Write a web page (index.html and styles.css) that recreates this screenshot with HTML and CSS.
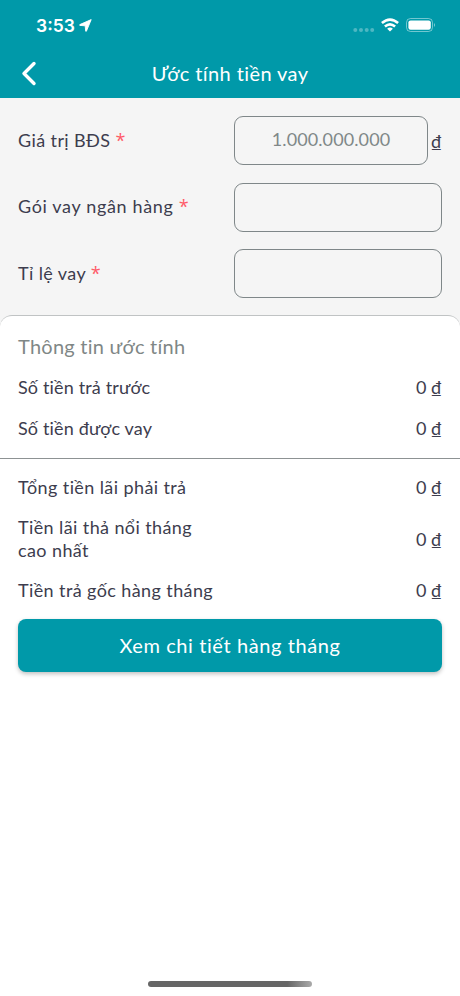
FILE: index.html
```html
<!DOCTYPE html>
<html lang="vi">
<head>
    <meta charset="UTF-8">
    <meta name="viewport" content="width=device-width, initial-scale=1.0">
    <title>Ước tính tiền vay</title>
    <link rel="stylesheet" href="styles.css">
</head>
<body>
    <header class="header">
        <div class="status-bar">
            <span class="time">3:53</span>
            <svg class="location" width="13" height="13" viewBox="0 0 13 13">
                <path d="M12.2 0.6 L0.8 5.6 L0.8 6.4 L6.2 6.8 L6.7 12.2 L7.4 12.2 Z" fill="#fff" stroke="#fff" stroke-width="0.9" stroke-linejoin="round"/>
            </svg>
            <div class="status-icons">
                <svg width="22" height="14" viewBox="0 0 22 14" fill="#fff" fill-opacity="0.3">
                    <circle cx="2.3" cy="12" r="2"/>
                    <circle cx="8" cy="12" r="2"/>
                    <circle cx="13.7" cy="12" r="2"/>
                    <circle cx="19.2" cy="12" r="2"/>
                </svg>
                <svg class="wifi" width="18" height="14" viewBox="0 0 18 14" fill="none" stroke="#fff" stroke-width="2.6">
                    <path d="M0.9 5.1 Q9 -1.9 17.1 5.1"/>
                    <path d="M3.9 8.5 Q9 4.2 14.1 8.5"/>
                    <path d="M9 13.6 L6.1 10.7 Q9 8.5 11.9 10.7 Z" fill="#fff" stroke="none"/>
                </svg>
                <svg class="battery" width="30" height="14" viewBox="0 0 30 14">
                    <rect x="0.5" y="0.5" width="26" height="13" rx="4" fill="none" stroke="#fff" stroke-opacity="0.45"/>
                    <rect x="2.4" y="2.4" width="22.4" height="9.4" rx="2.2" fill="#fff"/>
                    <path d="M28 5 Q30 7 28 9 Z" fill="#fff" fill-opacity="0.5"/>
                </svg>
            </div>
        </div>
        <div class="nav-bar">
            <button type="button" class="back" aria-label="Quay lại">
                <svg width="16" height="26" viewBox="0 0 16 26" fill="none" stroke="#fff" stroke-width="3.4" stroke-linecap="round" stroke-linejoin="round">
                    <path d="M13 2.5 L3 12.5 L13 22.5"/>
                </svg>
            </button>
            <h1>Ước tính tiền vay</h1>
        </div>
    </header>

    <form class="loan-form">
        <div class="form-group">
            <label for="price">Giá trị BĐS <span class="required">*</span></label>
            <div class="field">
                <input type="text" id="price" placeholder="1.000.000.000">
                <span class="unit">₫</span>
            </div>
        </div>
        <div class="form-group">
            <label class="wide" for="bank">Gói vay ngân hàng <span class="required">*</span></label>
            <div class="field"><input type="text" id="bank"></div>
        </div>
        <div class="form-group">
            <label for="rate">Tỉ lệ vay <span class="required">*</span></label>
            <div class="field"><input type="text" id="rate"></div>
        </div>
    </form>

    <main class="estimate">
        <h2>Thông tin ước tính</h2>
        <div class="row summary"><span>Số tiền trả trước</span><span class="amount">0 ₫</span></div>
        <div class="row summary"><span>Số tiền được vay</span><span class="amount">0 ₫</span></div>
        <hr>
        <div class="row"><span>Tổng tiền lãi phải trả</span><span class="amount">0 ₫</span></div>
        <div class="row"><span>Tiền lãi thả nổi tháng<br>cao nhất</span><span class="amount">0 ₫</span></div>
        <div class="row"><span>Tiền trả gốc hàng tháng</span><span class="amount">0 ₫</span></div>
        <button type="button" class="detail-btn">Xem chi tiết hàng tháng</button>
    </main>

    <div class="home-indicator"></div>
</body>
</html>
```
FILE: styles.css
```css
* {
    box-sizing: border-box;
}

body {
    font-family: Lato, 'Noto Sans', sans-serif;
    margin: 0;
    height: 996px;
    display: flex;
    flex-direction: column;
    background-color: #f5f5f5;
    color: #3d3d4e;
    font-size: 18px;
    letter-spacing: 0.4px;
    overflow: hidden;
}

.header {
    height: 98px;
    background-color: #0099a9;
    color: #fff;
}

.status-bar {
    display: flex;
    align-items: center;
    height: 50px;
    padding: 0 24px 0 36px;
}

.time {
    font-family: Inter, sans-serif;
    font-size: 17.5px;
    font-weight: 600;
    letter-spacing: 0;
}

.location {
    margin-left: 4px;
}

.status-icons {
    display: flex;
    margin-left: auto;
}

.wifi {
    margin-left: 6px;
}

.battery {
    margin-left: 7px;
}

.nav-bar {
    display: grid;
    grid-template-columns: 44px 1fr 44px;
    align-items: center;
    height: 48px;
    padding: 0 14px;
}

.back {
    display: flex;
    padding: 0 0 0 7px;
    border: none;
    background: none;
}

h1 {
    margin: 0;
    padding-bottom: 2px;
    font-size: 20px;
    font-weight: 400;
    text-align: center;
}

.loan-form {
    display: flex;
    flex-direction: column;
    gap: 17.6px;
    height: 217px;
    padding: 18px 18px 0;
}

.form-group {
    display: flex;
    align-items: center;
    justify-content: space-between;
}

label {
    padding-bottom: 2px;
    line-height: 22px;
}

.wide {
    letter-spacing: 0.65px;
}

.required {
    color: #ff5a68;
    font-family: 'Open Sans', sans-serif;
    letter-spacing: 0;
}

.field {
    display: flex;
    align-items: center;
    width: 208px;
}

.field input {
    flex: 1;
    min-width: 0;
    height: 49px;
    padding: 0 2px 3px;
    border: 1px solid #7f8789;
    border-radius: 9px;
    background: none;
    font: inherit;
    letter-spacing: 0.1px;
    text-align: center;
}

.field input::placeholder {
    color: #808888;
}

.unit {
    width: 14px;
    text-align: right;
    letter-spacing: 0;
}

.estimate {
    flex: 1;
    padding: 18px;
    border-top: 1px solid #c0c3c4;
    border-radius: 12px 12px 0 0;
    background-color: #fff;
}

h2 {
    margin: 0 0 17.3px;
    color: #7f8786;
    font-size: 20px;
    font-weight: 400;
    letter-spacing: 0.25px;
    line-height: 25px;
}

.row {
    display: flex;
    align-items: center;
    justify-content: space-between;
    margin-bottom: 18px;
    line-height: 22.3px;
}

.summary {
    letter-spacing: 0.15px;
}

.amount {
    letter-spacing: 0;
}

hr {
    height: 1px;
    margin: 19px -18px 17.3px;
    border: none;
    background-color: #8d9293;
}

.detail-btn {
    width: 100%;
    height: 53px;
    padding: 0 0 2px;
    border: none;
    border-radius: 8px;
    background-color: #0099a9;
    box-shadow: 0 2px 4px rgba(0, 0, 0, 0.25);
    color: #fff;
    font: inherit;
    font-size: 20px;
    letter-spacing: 0.6px;
}

.home-indicator {
    position: absolute;
    bottom: 9px;
    left: 148px;
    width: 164px;
    height: 6px;
    border-radius: 3px;
    background: linear-gradient(to right, #666 85%, #aaa);
}
```
